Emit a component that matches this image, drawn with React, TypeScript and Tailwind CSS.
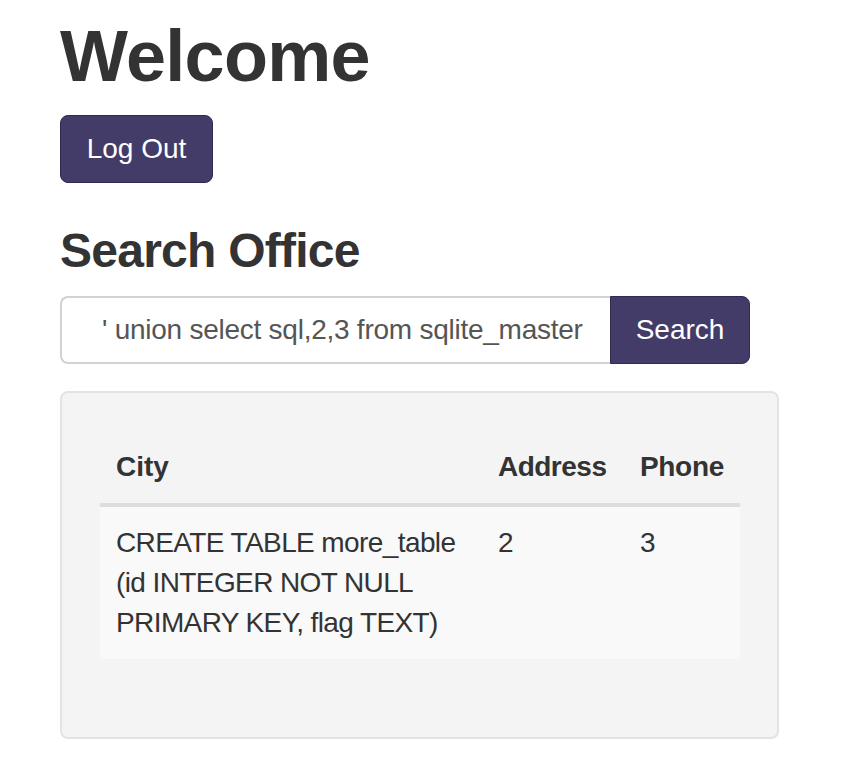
import React from "react";

export default function App() {
  return (
    <div
      className="min-h-[782px] bg-white pl-[60px] pt-[17px] text-[#333]"
      style={{ fontFamily: '"Liberation Sans", Arial, Helvetica, sans-serif' }}
    >
      <h1 className="m-0 text-[72px] font-bold leading-[79px] tracking-[-0.7px] text-[#333]">
        Welcome
      </h1>
      <button className="mt-[19px] w-[153px] rounded-[8px] border border-[#2f2a52] bg-[#433c69] py-[13px] text-[28px] leading-[40px] text-white">
        Log Out
      </button>
      <h2 className="mt-[41px] text-[48px] font-bold leading-[53px] tracking-[-0.75px] text-[#333]">
        Search Office
      </h2>
      <div className="mt-[19px] flex h-[68px] w-[690px]">
        <div className="flex flex-1 items-center overflow-hidden rounded-l-[8px] border-2 border-r-0 border-[#d2d2d2] bg-white pl-[40px]">
          <span className="whitespace-nowrap text-[28px] leading-[40px] tracking-[-0.25px] text-[#555]">
            ' union select sql,2,3 from sqlite_master
          </span>
        </div>
        <button className="w-[140px] rounded-r-[8px] border border-[#2f2a52] bg-[#433c69] text-[28px] leading-[40px] text-white">
          Search
        </button>
      </div>
      <div className="mt-[27px] w-[719px] rounded-[8px] border-2 border-[#e3e3e3] bg-[#f4f4f4] p-[38px]">
        <table className="mb-[40px] w-[640px] border-collapse text-left text-[28px] leading-[40px]">
          <thead>
            <tr className="border-b-4 border-[#dddddd]">
              <th className="w-[382px] p-[16px] font-bold">City</th>
              <th className="w-[142px] p-[16px] font-bold tracking-[-0.5px]">Address</th>
              <th className="p-[16px] font-bold tracking-[-0.3px]">Phone</th>
            </tr>
          </thead>
          <tbody>
            <tr className="bg-[#f9f9f9]">
              <td className="p-[16px] align-top tracking-[-0.6px]">
                <span className="block whitespace-nowrap">CREATE TABLE more_table</span>
                <span className="block whitespace-nowrap">(id INTEGER NOT NULL</span>
                <span className="block whitespace-nowrap">PRIMARY KEY, flag TEXT)</span>
              </td>
              <td className="p-[16px] align-top">2</td>
              <td className="p-[16px] align-top">3</td>
            </tr>
          </tbody>
        </table>
      </div>
    </div>
  );
}
